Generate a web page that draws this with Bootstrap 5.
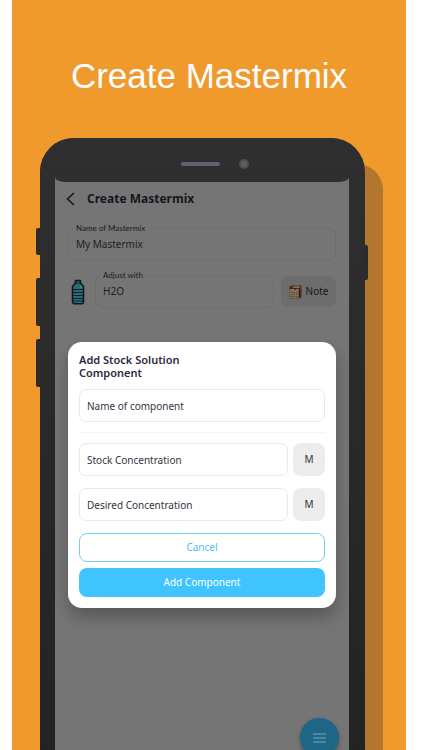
<!DOCTYPE html>
<html lang="en">
<head>
<meta charset="utf-8">
<meta name="viewport" content="width=device-width, initial-scale=1">
<title>Create Mastermix</title>
<link href="https://cdn.jsdelivr.net/npm/bootstrap@5.3.0/dist/css/bootstrap.min.css" rel="stylesheet">
<style>
body { font-family: "Noto Sans", sans-serif; font-size: 10px; line-height: 13px; color: #2b2a3d; background: #fff; }
.promo { background: #f09a2d; margin: 0 16px 0 12px; min-height: 100vh; }
.promo-title { font-family: "Liberation Sans", sans-serif; font-size: 35px; line-height: 40px; padding: 56px 0 42px; }
.phone { background: #2b2b2b; border-radius: 34px 34px 0 0; margin: 0 41px 0 28px; padding: 0 16px 0 15px; }
.phone-shadow { background: #b2762f; border-radius: 0 26px 0 0; top: 26px; bottom: 0; right: -18px; width: 50px; z-index: 0; }
.phone-face { background: linear-gradient(#2f2f2f, #232323); border-radius: 34px 34px 0 0; inset: 0; }
.side-key { background: #2b2b2b; width: 6px; border-radius: 2px; }
.key-a { left: -4px; top: 90px; height: 27px; }
.key-b { left: -4px; top: 140px; height: 48px; }
.key-c { left: -4px; top: 201px; height: 48px; }
.key-d { right: -3px; top: 107px; height: 35px; }
.bezel { height: 39px; padding-top: 13px; }
.speaker { width: 39px; height: 4px; border-radius: 2px; background: #62606f; margin-left: 126px; }
.lens { width: 10px; height: 10px; border-radius: 50%; background: #5d5c64; border: 2px solid #4f4e56; margin-left: 19px; }
.app-screen { background: #757575; }
.bezel-lip { height: 5px; background: #2f2f2f; border-radius: 0 0 10px 10px / 0 0 5px 5px; }
.app-body { padding: 0 13px; color: #15151f; }
.app-bar { height: 34px; gap: 13px; margin-bottom: 12px; }
.app-bar h2 { font-size: 12px; line-height: 16px; }
.back-btn { width: 6px; color: #15151f; }
.field-box { font-size: 10px; line-height: 13px; height: 33px; padding: 0 7px; border: 1px solid #e9e9ec; border-radius: 7px; color: #34333f; background: transparent; box-shadow: none; }
.field-box::placeholder { color: #34333f; opacity: 1; }
.app-body .field-box { padding-bottom: 2px; border-color: #6d6d6d; color: #1e1e26; }
.app-body .field-box:focus { background: transparent; box-shadow: none; }
.tag-label { left: 5px; top: -6px; padding: 0 3px; font-family: Lato, sans-serif; font-size: 8px; line-height: 12px; background: #757575; color: #1a1a22; }
.adjust-row { margin-top: 14px; gap: 7px; }
.bottle { width: 20px; }
.note-btn { width: 55px; height: 31px; gap: 4px; font-size: 10px; line-height: 13px; border-radius: 8px; background: #6d6d6d; color: #15151f; }
.stock-dialog { left: 13px; right: 13px; top: 165px; border-radius: 14px; padding: 11px; background: #fff; box-shadow: 0 9px 16px rgba(0,0,0,.25); }
.stock-dialog h3 { font-size: 11px; line-height: 13px; width: 120px; margin-bottom: 10px; }
.split { height: 1px; background: #f5f5f6; margin: 10px 0; }
.unit-btn { width: 32px; height: 33px; border-radius: 8px; background: #ececed; color: #34333f; font-size: 10px; line-height: 13px; }
.pair { gap: 5px; margin-bottom: 12px; }
.act-btn { height: 29px; font-size: 10px; line-height: 13px; border-radius: 8px; }
.act-cancel { border: 1px solid #72cdf8; color: #4cbdf0; margin-bottom: 6px; }
.act-add { background: #40c4ff; color: #fff; }
.menu-fab { width: 39px; height: 39px; right: 10px; bottom: -7px; background: #1e6685; box-shadow: 0 2px 4px rgba(0,0,0,.3); }
</style>
</head>
<body>
<main class="promo d-flex flex-column overflow-hidden">
  <h1 class="promo-title text-white text-center fw-normal m-0">Create Mastermix</h1>
  <section class="phone position-relative flex-grow-1 d-flex flex-column">
    <span class="phone-shadow position-absolute"></span>
    <span class="side-key key-a position-absolute"></span>
    <span class="side-key key-b position-absolute"></span>
    <span class="side-key key-c position-absolute"></span>
    <span class="side-key key-d position-absolute"></span>
    <span class="phone-face position-absolute"></span>
    <div class="bezel position-relative">
      <div class="d-flex align-items-center mt-2">
        <span class="speaker"></span><span class="lens"></span>
      </div>
    </div>
    <div class="app-screen position-relative flex-grow-1">
      <div class="bezel-lip"></div>
      <div class="app-body">
        <header class="app-bar d-flex align-items-center">
          <button type="button" class="back-btn btn border-0 p-0 d-flex justify-content-center" aria-label="Back">
            <svg class="flex-shrink-0" width="10" height="16" viewBox="0 0 10 16" fill="none" stroke="currentColor" stroke-width="1.6"><path d="M8 2 1.500 8 8 14"/></svg>
          </button>
          <h2 class="fw-bold m-0">Create Mastermix</h2>
        </header>
        <div class="position-relative">
          <input id="mixName" class="form-control field-box" value="My Mastermix">
          <label for="mixName" class="tag-label position-absolute">Name of Mastermix</label>
        </div>
        <div class="adjust-row d-flex align-items-center">
          <div class="bottle d-flex justify-content-center">
            <svg width="14" height="26" viewBox="0 0 14 26"><path d="M4.500 1.500h5V4l3 3.500V23.500l-1.200 1.200H2.700l-1.200-1.200V7.500l3-3.500z" fill="#2d6a78" stroke="#0b171c" stroke-width="1.500" stroke-linejoin="round"/><path d="M4.500 4h5M2 10.500h10M2 13.500h10M2 16.500h10M2 19.500h10M2 22h10" stroke="#0d232b" stroke-width="1.100"/><path d="M9 8h1.500" stroke="#6f9ca6"/></svg>
          </div>
          <div class="position-relative flex-grow-1">
            <input id="adjustWith" class="form-control field-box" value="H2O">
            <label for="adjustWith" class="tag-label position-absolute">Adjust with</label>
          </div>
          <button type="button" class="note-btn btn border-0 p-0 d-flex align-items-center justify-content-center">
            <svg width="13" height="14" viewBox="0 0 13 14"><path d="M2.500.5h10v11.500L10 13.500H.5V3z" fill="#4a2c22"/><path d="M.7 4h9v9.300h-9z" fill="#82735a"/><path d="M2.800 1.200h8v1.800h-8z" fill="#85704f"/><path d="M1.500 4V1.800h3M6 5V3M10.500 4v8.500" stroke="#2c1915" fill="none"/><path d="M2 7.500h1.500M4.500 7.500H6M7 7.500h1.500M2 9.500h1.500M4.500 9.500H6M7 9.500h1.500M2 11.500h1.500M4.500 11.500H6M7 11.500h1.500" stroke="#4e4638"/></svg>
            <span>Note</span>
          </button>
        </div>
      </div>
      <form class="stock-dialog position-absolute" role="dialog" aria-labelledby="dlgTitle">
        <h3 id="dlgTitle" class="fw-semibold">Add Stock Solution Component</h3>
        <input class="form-control field-box" placeholder="Name of component" aria-label="Name of component">
        <div class="split"></div>
        <div class="pair d-flex">
          <input class="form-control field-box" placeholder="Stock Concentration" aria-label="Stock Concentration">
          <button type="button" class="unit-btn btn border-0 p-0 flex-shrink-0">M</button>
        </div>
        <div class="pair d-flex">
          <input class="form-control field-box" placeholder="Desired Concentration" aria-label="Desired Concentration">
          <button type="button" class="unit-btn btn border-0 p-0 flex-shrink-0">M</button>
        </div>
        <button type="button" class="act-btn act-cancel btn w-100 p-0">Cancel</button>
        <button type="button" class="act-btn act-add btn border-0 w-100 p-0">Add Component</button>
      </form>
      <button type="button" class="menu-fab btn border-0 rounded-circle p-0 position-absolute d-flex align-items-center justify-content-center" aria-label="Menu">
        <svg width="13" height="10" viewBox="0 0 13 10" stroke="#80a5b4" stroke-width="1.200"><path d="M0 1h13M0 5h13M0 9h13"/></svg>
      </button>
    </div>
  </section>
</main>
<script src="https://cdn.jsdelivr.net/npm/bootstrap@5.3.0/dist/js/bootstrap.bundle.min.js"></script>
</body>
</html>
